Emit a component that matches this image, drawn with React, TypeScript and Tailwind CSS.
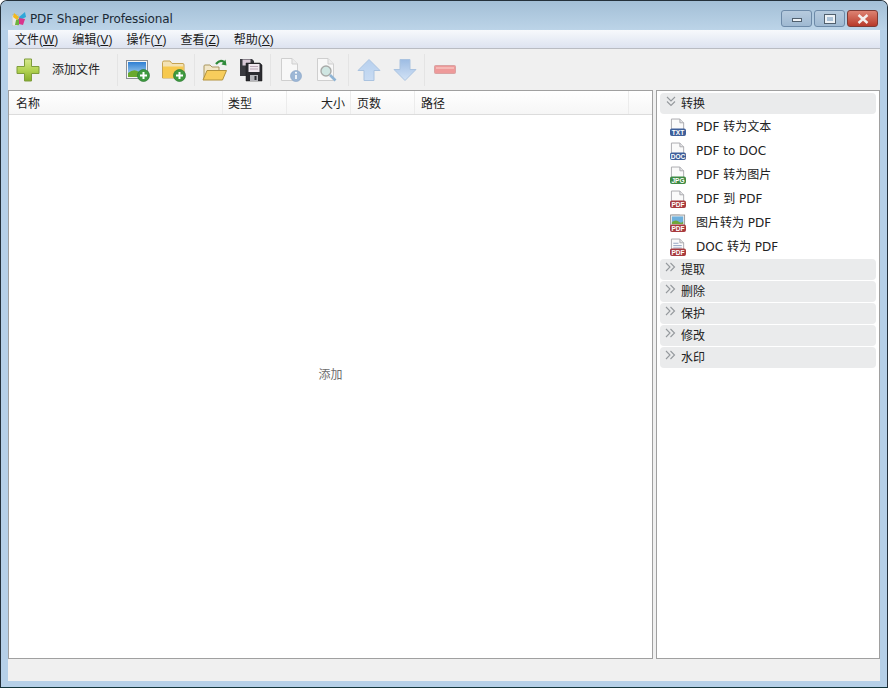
import React from "react";

const FONT = "[font-family:'DejaVu_Sans','Noto_Sans_CJK_SC',sans-serif]";

function Logo() {
  return (
    <svg width="14" height="14" viewBox="0 0 14 14">
      <rect x="0" y="3" width="6" height="11" fill="#e8e8e8" stroke="#9aa" strokeWidth="0.6" />
      <path d="M2 1 L7 5 L5 8 L1 5 Z" fill="#f2b91e" />
      <path d="M13 0 L14 5 L8 8 L7 5 Z" fill="#2fa7d8" />
      <path d="M7 6 L13 7 L11 13 L7 12 Z" fill="#d9358d" />
      <path d="M4 8 L7 7 L7 13 L3 13 Z" fill="#6cb33f" />
    </svg>
  );
}

function PlusBig() {
  return (
    <svg width="24" height="24" viewBox="0 0 24 24">
      <defs>
        <linearGradient id="pb" x1="0" y1="0" x2="0" y2="1">
          <stop offset="0" stopColor="#d6e88e" />
          <stop offset="0.5" stopColor="#b3d353" />
          <stop offset="1" stopColor="#86ad2a" />
        </linearGradient>
      </defs>
      <path d="M8.5 1 H15.5 V8.5 H23 V15.5 H15.5 V23 H8.5 V15.5 H1 V8.5 H8.5 Z" fill="url(#pb)" stroke="#7f9d3c" strokeWidth="1" />
    </svg>
  );
}

function GreenPlus({ x, y }: { x: number; y: number }) {
  return (
    <g>
      <circle cx={x} cy={y} r="6" fill="#3f9a3f" stroke="#2b7a32" strokeWidth="0.7" />
      <path d={`M${x - 3.5} ${y} H${x + 3.5} M${x} ${y - 3.5} V${y + 3.5}`} stroke="#fff" strokeWidth="2" />
    </g>
  );
}

function AddImage() {
  return (
    <svg width="24" height="24" viewBox="0 0 24 24">
      <defs>
        <linearGradient id="sky" x1="0" y1="0" x2="0" y2="1">
          <stop offset="0" stopColor="#2f7fd3" />
          <stop offset="1" stopColor="#b7dcf4" />
        </linearGradient>
      </defs>
      <rect x="0.5" y="2.5" width="21" height="18" fill="#f6f6f6" stroke="#8a8f96" />
      <rect x="2" y="4" width="18" height="15" fill="url(#sky)" />
      <path d="M2 15 Q8 10 13 14 T20 13 V19 H2 Z" fill="#69a92f" />
      <GreenPlus x={17.5} y={17.5} />
    </svg>
  );
}

function AddFolder() {
  return (
    <svg width="24" height="24" viewBox="0 0 24 24">
      <path d="M0.5 4.5 Q0.5 3 2 3 H8 L10 5.5 H21 Q22 5.5 22 7 V20 H0.5 Z" fill="#f3e2b4" stroke="#c6a352" />
      <path d="M1 8.5 H21.5 V20 H1 Z" fill="#f7c94e" />
      <GreenPlus x={17.5} y={17.5} />
    </svg>
  );
}

function OpenFolder() {
  return (
    <svg width="26" height="24" viewBox="0 0 26 24">
      <path d="M2 21 V8 Q2 7 3 7 H8 L10 9 H17 V21 Z" fill="#f2e7c9" stroke="#a9975f" />
      <path d="M1 22 L5 12.5 H24.5 L20.5 22 Z" fill="#f7cd5c" stroke="#b3923c" />
      <path d="M14 6 Q18 1 22 4" fill="none" stroke="#2f8a3a" strokeWidth="2.2" />
      <path d="M24.5 7.5 L19.5 6.5 L23.5 1.5 Z" fill="#2f8a3a" />
    </svg>
  );
}

function Save() {
  return (
    <svg width="24" height="24" viewBox="0 0 24 24">
      <path d="M1 1 H13 L15 3 V18 H1 Z" fill="#3a3a40" />
      <rect x="3.5" y="1.5" width="8" height="6" fill="#d8c9d6" />
      <path d="M7 5 H21 L23 7 V23 H7 Z" fill="#2b2b30" stroke="#18181b" strokeWidth="0.5" />
      <rect x="9.5" y="6" width="11" height="8" fill="#f0e8ef" />
      <path d="M11 8.5 H19 M11 11 H19" stroke="#b9a6b6" />
      <rect x="11" y="17" width="8" height="6" fill="#b5b5ba" />
      <rect x="15.5" y="18" width="2" height="4" fill="#2b2b30" />
    </svg>
  );
}

function PageInfo() {
  return (
    <svg width="24" height="26" viewBox="0 0 24 26">
      <path d="M2.5 1.5 H13 L18.5 7 V23.5 H2.5 Z" fill="#f8f8f8" stroke="#cfcfcf" />
      <path d="M13 1.5 V7 H18.5" fill="#ececec" stroke="#cfcfcf" />
      <circle cx="17" cy="19" r="5.5" fill="#9db7d6" stroke="#85a1c4" strokeWidth="0.6" />
      <path d="M17 18 V22" stroke="#fff" strokeWidth="1.6" />
      <circle cx="17" cy="15.8" r="1" fill="#fff" />
    </svg>
  );
}

function PageSearch() {
  return (
    <svg width="24" height="26" viewBox="0 0 24 26">
      <path d="M2.5 1.5 H13 L18.5 7 V23.5 H2.5 Z" fill="#f8f8f8" stroke="#cfcfcf" />
      <path d="M13 1.5 V7 H18.5" fill="#ececec" stroke="#cfcfcf" />
      <circle cx="11" cy="14" r="5" fill="#cfe6e2" stroke="#a8aaa8" strokeWidth="1.4" />
      <path d="M15 18 L20.5 23.5" stroke="#8fb4d4" strokeWidth="2.6" />
    </svg>
  );
}

function Arrow({ down }: { down?: boolean }) {
  return (
    <svg width="24" height="24" viewBox="0 0 24 24" style={down ? { transform: "scaleY(-1)" } : undefined}>
      <defs>
        <linearGradient id={down ? "ad" : "au"} x1="0" y1="0" x2="0" y2="1">
          <stop offset="0" stopColor={down ? "#d3e3f6" : "#b7d0ee"} />
          <stop offset="1" stopColor={down ? "#9dbce3" : "#c9dcf3"} />
        </linearGradient>
      </defs>
      <path d="M12 1.5 L23 12.5 H17 V22.5 H7 V12.5 H1 Z" fill={`url(#${down ? "ad" : "au"})`} stroke="#aac3e0" />
    </svg>
  );
}

function Minus() {
  return (
    <svg width="22" height="12" viewBox="0 0 22 12">
      <rect x="0.5" y="1.5" width="21" height="8" rx="1" fill="#ee9a9a" stroke="#d9a3a3" />
      <rect x="2" y="3" width="18" height="2" fill="#f5b9b6" />
    </svg>
  );
}

function FileIcon({ label, color, kind = "page" }: { label: string; color: string; kind?: "page" | "image" | "doc" }) {
  return (
    <svg width="17" height="19" viewBox="0 0 17 19" className="mt-[1px]">
      <path d="M1.5 0.5 H10.5 L14.5 4.5 V14 H1.5 Z" fill="#fafafa" stroke="#a9a9ad" />
      <path d="M10.5 0.5 V4.5 H14.5" fill="#e4e4e6" stroke="#a9a9ad" />
      {kind === "image" && (
        <g>
          <rect x="0.5" y="0.5" width="15" height="11" fill="#eee" stroke="#9a9a9a" />
          <rect x="2" y="2" width="12" height="8" fill="#6db0dd" />
          <path d="M2 8 Q6 5 9 7.5 T14 7 V10 H2 Z" fill="#6fa83a" />
        </g>
      )}
      {kind === "doc" && <path d="M3.5 5 H9 M3.5 7.5 H12.5 M3.5 10 H12.5" stroke="#8fa0c0" />}
      <rect x="0" y="10.5" width="17" height="8" rx="2" fill={color} />
      <text x="8.5" y="17" textAnchor="middle" fontSize="7" fontWeight="700" fill="#fff" fontFamily="'Liberation Sans',sans-serif">
        {label}
      </text>
    </svg>
  );
}

function Chevrons({ open }: { open?: boolean }) {
  return (
    <svg width="11" height="11" viewBox="0 0 11 11" style={open ? { transform: "rotate(90deg)" } : undefined}>
      <path d="M1 1 L5 5 L1 9 M5.5 1 L9.5 5 L5.5 9" fill="none" stroke="#95999d" strokeWidth="1.1" />
    </svg>
  );
}

function Sep() {
  return <div className="w-px h-[32px] bg-[#e4e4e4] mt-[1px]" />;
}

function Menu({ label, k }: { label: string; k: string }) {
  return (
    <span className="text-[12px] text-[#1a1a1a] whitespace-nowrap [font-family:'Liberation_Sans','Noto_Sans_CJK_SC',sans-serif]">
      {label}(<span className="underline">{k}</span>)
    </span>
  );
}

function Col({ label, className }: { label: string; className: string }) {
  return <div className={`h-full border-r border-[#ececec] text-[12px] text-[#222] flex items-center pt-[2px] ${className}`}>{label}</div>;
}

function Item({ icon, label }: { icon: React.ReactNode; label: string }) {
  return (
    <div className="h-[24px] flex items-center pl-[10px]">
      <span className="w-[16px] h-[20px] flex">{icon}</span>
      <span className="ml-[10px] text-[12px] text-[#222] whitespace-pre">{label}</span>
    </div>
  );
}

function Group({ label, open }: { label: string; open?: boolean }) {
  return (
    <div className="h-[21px] rounded-[4px] bg-[#eaebec] flex items-center pl-[5px]">
      <span className="w-[11px] h-[11px] flex mb-[4px]">
        <Chevrons open={open} />
      </span>
      <span className="ml-[5px] text-[12px] text-[#222]">{label}</span>
    </div>
  );
}

export default function App() {
  return (
    <div className={`w-[888px] h-[688px] overflow-hidden rounded-t-[7px] border border-[#24303a] border-b-[#12343a] bg-[#b6d0e8] flex flex-col ${FONT}`}>
      <div className="h-[29px] shrink-0 flex items-center bg-gradient-to-b from-[#a3bfd6] to-[#bcd4e8] pl-[11px] pr-[9px] pt-[6px]">
        <Logo />
        <span className="ml-[4px] text-[12px] tracking-[-0.13px] text-[#1b2a36] whitespace-nowrap">PDF Shaper Professional</span>
        <div className="ml-auto flex gap-[2px]">
          <div className="w-[31px] h-[17px] rounded-[3px] border border-[#6d8aa8] bg-gradient-to-b from-[#b7cbde] to-[#9fb9d2] flex items-center justify-center">
            <div className="w-[10px] h-[4px] mt-[3px] bg-[#eef2f6] border border-[#51606e]" />
          </div>
          <div className="w-[31px] h-[17px] rounded-[3px] border border-[#6d8aa8] bg-gradient-to-b from-[#b7cbde] to-[#9fb9d2] flex items-center justify-center">
            <div className="w-[10px] h-[8px] border-[2px] border-[#eef2f6] outline outline-1 outline-[#51606e]" />
          </div>
          <div className="w-[31px] h-[17px] rounded-[3px] border border-[#7d3a34] bg-gradient-to-b from-[#dd8272] to-[#b8392a] flex items-center justify-center text-white">
            <svg width="12" height="10" viewBox="0 0 12 10">
              <path d="M1.5 1 L10.5 9 M10.5 1 L1.5 9" stroke="#f4f0ee" strokeWidth="2.4" />
            </svg>
          </div>
        </div>
      </div>

      <div className="flex-1 min-h-0 flex flex-col mx-[7px] mb-[6px] bg-[#f0f0f0]">
        <div className="h-[19px] shrink-0 flex items-center gap-[14px] pl-[7px] pt-[2px] bg-gradient-to-b from-[#f7f9fc] to-[#dde3f0] border-b border-[#b9bcc2]">
          <Menu label="文件" k="W" />
          <Menu label="编辑" k="V" />
          <Menu label="操作" k="Y" />
          <Menu label="查看" k="Z" />
          <Menu label="帮助" k="X" />
        </div>

        <div className="h-[41px] shrink-0 flex items-center pl-[8px]">
          <PlusBig />
          <span className="ml-[12px] text-[12px] text-[#222] whitespace-nowrap">添加文件</span>
          <div className="ml-[17px]"><Sep /></div>
          <div className="ml-[8px] flex"><AddImage /></div>
          <div className="ml-[12px] flex"><AddFolder /></div>
          <div className="ml-[8px]"><Sep /></div>
          <div className="ml-[7px] flex"><OpenFolder /></div>
          <div className="ml-[11px] flex"><Save /></div>
          <div className="ml-[7px]"><Sep /></div>
          <div className="ml-[8px] flex"><PageInfo /></div>
          <div className="ml-[12px] flex"><PageSearch /></div>
          <div className="ml-[9px]"><Sep /></div>
          <div className="ml-[8px] flex"><Arrow /></div>
          <div className="ml-[12px] flex"><Arrow down /></div>
          <div className="ml-[7px]"><Sep /></div>
          <div className="ml-[9px] flex"><Minus /></div>
        </div>

        <div className="flex-1 min-h-0 flex gap-[3px]">
          <div className="w-[645px] shrink-0 border border-[#a0a0a0] bg-white flex flex-col">
            <div className="h-[24px] shrink-0 flex items-center border-b border-[#dcdcdc] bg-gradient-to-b from-white to-[#f6f6f6]">
              <Col label="名称" className="w-[214px] pl-[7px]" />
              <Col label="类型" className="w-[64px] pl-[5px]" />
              <Col label="大小" className="w-[64px] justify-end pr-[5px]" />
              <Col label="页数" className="w-[64px] pl-[6px]" />
              <Col label="路径" className="w-[214px] pl-[6px]" />
            </div>
            <div className="flex-1 flex items-center justify-center pb-[24px] text-[12px] text-[#6d6d6d]">添加</div>
          </div>
          <div className="flex-1 border border-[#a0a0a0] bg-white flex flex-col pt-[2px] pl-[3px] pr-[3px] gap-[1px]">
            <Group label="转换" open />
            <div className="flex flex-col mb-[-1px]">
              <Item icon={<FileIcon label="TXT" color="#3e5f9a" />} label="PDF 转为文本" />
              <Item icon={<FileIcon label="DOC" color="#3e5f9a" />} label="PDF to DOC" />
              <Item icon={<FileIcon label="JPG" color="#3e8a44" />} label="PDF 转为图片" />
              <Item icon={<FileIcon label="PDF" color="#a83a3e" />} label="PDF 到 PDF" />
              <Item icon={<FileIcon label="PDF" color="#a83a3e" kind="image" />} label="图片转为 PDF" />
              <Item icon={<FileIcon label="PDF" color="#a83a3e" kind="doc" />} label="DOC 转为 PDF" />
            </div>
            <Group label="提取" />
            <Group label="删除" />
            <Group label="保护" />
            <Group label="修改" />
            <Group label="水印" />
          </div>
        </div>

        <div className="h-[22px] shrink-0" />
      </div>
    </div>
  );
}
